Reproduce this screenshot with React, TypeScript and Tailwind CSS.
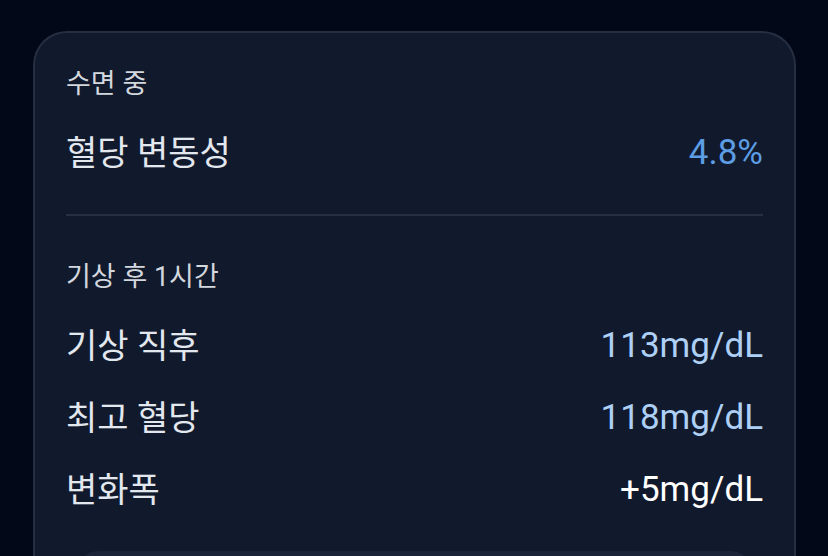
const rows = [
  { label: "기상 직후", value: "113mg/dL", color: "text-[#aed0f6]" },
  { label: "최고 혈당", value: "118mg/dL", color: "text-[#aed0f6]" },
  { label: "변화폭", value: "+5mg/dL", color: "text-white" },
];

const App = () => {
  return (
    <div
      className="h-[556px] overflow-hidden bg-[#020818] pl-[33px] pr-[32px] pt-[31px]"
      style={{ fontFamily: "Roboto, 'Noto Sans CJK KR', sans-serif" }}
    >
      <div className="h-[620px] rounded-t-[34px] border-2 border-b-0 border-[#262f42] bg-[#111a2d] px-[31px] pt-[35px]">
        <div className="text-[27px] leading-[32px] text-[#d3d7de]">수면 중</div>
        <div className="mt-[33px] flex items-center justify-between leading-[40px]">
          <span className="text-[34px] text-[#e3e7ee]">혈당 변동성</span>
          <span className="text-[35px] text-[#5c9de4]">4.8%</span>
        </div>

        <div className="mt-[41px] h-[2px] bg-[#263044]" />

        <div className="mt-[45px] text-[27px] leading-[32px] text-[#d3d7de]">기상 후 1시간</div>
        <div className="mt-[33px] flex flex-col gap-[32px]">
          {rows.map((r) => (
            <div key={r.label} className="flex items-center justify-between leading-[40px]">
              <span className="text-[34px] text-[#e3e7ee]">{r.label}</span>
              <span className={`text-[35px] ${r.color}`}>{r.value}</span>
            </div>
          ))}
        </div>

        <div className="mx-3 mt-[41px] h-[60px] rounded-t-[20px] bg-[#1a2337]" />
      </div>
    </div>
  );
};

export default App;
